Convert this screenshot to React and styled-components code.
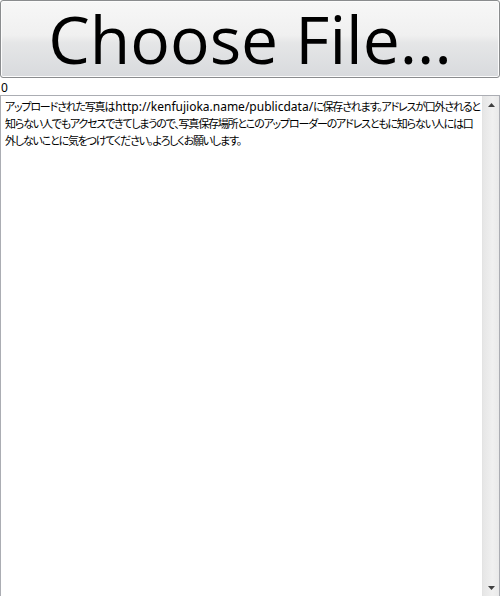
import React from 'react';
import styled, { createGlobalStyle } from 'styled-components';

const GlobalStyle = createGlobalStyle`
  html, body {
    margin: 0;
    padding: 0;
    background: #ffffff;
  }

  body {
    font-family: "Noto Sans", "Noto Sans CJK JP", sans-serif;
    color: #000000;
  }
`;

const Page = styled.div`
  display: flex;
  flex-direction: column;
  width: 500px;
  height: 596px;
  overflow: hidden;
`;

const ChooseButton = styled.button`
  display: block;
  box-sizing: border-box;
  width: 500px;
  height: 78px;
  margin: 0 0 1px;
  padding: 0 0 3px;
  border: 1px solid #8a8c8e;
  border-radius: 3px;
  box-shadow: inset 0 0 0 1px #fcfcfc;
  background: linear-gradient(#f7f7f7 0%, #f0f0f0 45%, #e5e6e7 55%, #d8dadd 100%);
  font-family: "Open Sans", "Noto Sans", sans-serif;
  font-size: 66px;
  line-height: 1;
  font-weight: 400;
  color: #000000;
  text-align: center;
  cursor: default;
`;

const Count = styled.div`
  height: 16px;
  padding-left: 1px;
  font-family: "Noto Sans", sans-serif;
  font-size: 12px;
  line-height: 17px;
`;

const TextBox = styled.div`
  flex: 1;
  display: flex;
  box-sizing: border-box;
  border: 1px solid #abadb3;
  border-bottom: none;
  min-height: 0;
`;

const Notice = styled.div`
  flex: 1;
  box-sizing: border-box;
  padding: 2px 2px 2px 4px;
  overflow: hidden;
  font-family: "Noto Sans CJK JP", sans-serif;
  font-feature-settings: "palt";
  font-size: 11px;
  line-height: 17px;
  letter-spacing: -1.2px;
  color: #000000;
  background: #ffffff;
`;

const Url = styled.span`
  margin-left: 1px;
  font-family: "Noto Sans", sans-serif;
  font-size: 12px;
  letter-spacing: 0;
`;

const ScrollBar = styled.div`
  display: flex;
  flex-direction: column;
  width: 16px;
  background: linear-gradient(90deg, #e6e6e6, #f0f0f0 60%, #e9e9e9);
  border-left: 1px solid #e3e3e3;
`;

const ArrowButton = styled.div`
  display: flex;
  align-items: center;
  justify-content: center;
  height: 17px;
`;

const Track = styled.div`
  flex: 1;
`;

const Arrow = ({ down }) => (
  <svg width="7" height="4" viewBox="0 0 7 4">
    <path
      d={down ? 'M0 0 H7 L3.5 4 Z' : 'M0 4 H7 L3.5 0 Z'}
      fill="#404040"
    />
  </svg>
);

const App = () => {
  return (
    <Page>
      <GlobalStyle />
      <ChooseButton type="button">Choose File...</ChooseButton>
      <Count>0</Count>
      <TextBox>
        <Notice role="textbox" aria-readonly="true">
          アップロードされた写真は<Url>http://kenfujioka.name/publicdata/</Url>
          に保存されます。アドレスが口外されると知らない人でもアクセスできてしまうので、写真保存場所とこのアップローダーのアドレスともに知らない人には口外しないことに気をつけてください。よろしくお願いします。
        </Notice>
        <ScrollBar>
          <ArrowButton>
            <Arrow />
          </ArrowButton>
          <Track />
          <ArrowButton>
            <Arrow down />
          </ArrowButton>
        </ScrollBar>
      </TextBox>
    </Page>
  );
};

export default App;
